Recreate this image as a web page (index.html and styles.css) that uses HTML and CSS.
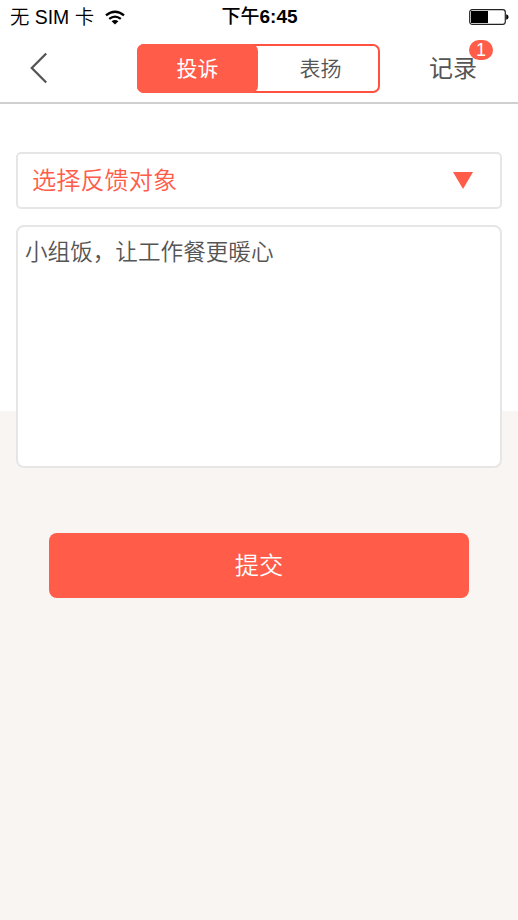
FILE: index.html
```html
<!DOCTYPE html>
<html lang="zh-CN">
<head>
<meta charset="utf-8">
<title>投诉</title>
<link rel="stylesheet" href="styles.css">
</head>
<body>
<div class="status">
  <div class="carrier"><span>无 SIM 卡</span>
    <svg class="wifi" width="20" height="15" viewBox="0 0 20 15"><g fill="none" stroke="#000" stroke-width="2.3"><path d="M1 5.3Q10-1.9 19 5.3"/><path d="M4.2 8.9Q10 4.4 15.8 8.9"/></g><path d="M6.6 11.2Q10 8.6 13.4 11.2L10 14.6Z"/></svg>
  </div>
  <div class="time"><span>下午</span>6:45</div>
  <svg class="battery" width="40" height="16" viewBox="0 0 40 16"><rect x=".7" y=".7" width="35.6" height="14.6" rx="2.5" fill="#fff" stroke="#222" stroke-width="1.2"/><path d="M2 2h17v12H2z"/><path d="M37.2 5.2q2.4 .5 2.4 2.8t-2.4 2.8z"/></svg>
</div>
<header class="nav">
  <svg class="back" width="18" height="32" viewBox="0 0 18 32"><path d="M16.2 1.5 1.8 16l14.4 14.5" fill="none" stroke="#555" stroke-width="2.3"/></svg>
  <div class="tabs"><div class="tab active">投诉</div><div class="tab">表扬</div></div>
  <div class="records">记录<span class="badge">1</span></div>
</header>
<main class="form">
  <div class="select"><span>选择反馈对象</span>
    <svg width="20" height="17" viewBox="0 0 20 17"><path d="M0 0h20L10 17z" fill="#ff5c4a"/></svg>
  </div>
  <div class="message">小组饭，让工作餐更暖心</div>
</main>
<div class="submit">提交</div>
</body>
</html>
```
FILE: styles.css
```css
* { box-sizing: border-box; }
body {
  margin: 0;
  height: 920px;
  overflow: hidden;
  background: linear-gradient(#fff 411px, #f8f5f2 411px) no-repeat;
  color: #555;
  font-family: "Liberation Sans", "Noto Sans CJK SC", sans-serif;
  font-weight: 350;
}
.status {
  height: 34px;
  padding: 0 9px 0 10px;
  display: grid;
  grid-template-columns: 1fr auto 1fr;
  align-items: center;
  color: #000;
  font-size: 19.4px;
  line-height: 34px;
}
.carrier { display: flex; align-items: center; gap: 11px; white-space: nowrap; }
.wifi { flex: none; }
.time { font-size: 19px; font-weight: 600; }
.time span { font-weight: 500; }
.battery { justify-self: end; }
.nav {
  height: 70px;
  border-bottom: 2px solid #d0d0d0;
  padding: 0 41px 0 30px;
  display: flex;
  align-items: center;
  justify-content: space-between;
}
.tabs {
  width: 243px;
  height: 49px;
  margin-left: 40px;
  display: flex;
  border: 2px solid #ff5040;
  border-radius: 7px;
  font-size: 21px;
  line-height: 45px;
  text-align: center;
}
.tab { flex: 1; margin: 0 -1px 0 4px; }
.tab.active {
  flex: none;
  width: 121px;
  margin: -2px 0 -2px -2px;
  line-height: 49px;
  border-radius: 7px;
  background: #ff5c4a;
  color: #fff;
  font-weight: 400;
}
.records { position: relative; font-size: 24px; font-weight: 400; line-height: 36px; top: 1px; }
.badge {
  position: absolute;
  left: 40px;
  top: -11px;
  width: 24px;
  height: 20px;
  border-radius: 10px;
  background: #ff5c4a;
  color: #fff;
  font-size: 18px;
  line-height: 21px;
  text-align: center;
}
.form {
  padding: 48px 16px 0;
  display: flex;
  flex-direction: column;
  gap: 16px;
}
.select, .message { background: #fff; border: 2px solid #e6e6e6; }
.select {
  height: 57px;
  border-radius: 5px;
  padding: 0 27px 0 14px;
  display: flex;
  align-items: center;
  justify-content: space-between;
  color: #ff5c4a;
  font-size: 24.2px;
  line-height: 53px;
}
.message {
  height: 243px;
  border-radius: 8px;
  padding: 9px 7px;
  font-size: 22.6px;
  line-height: 34px;
}
.submit {
  height: 65px;
  margin: 65px 49px 0;
  border-radius: 8px;
  background: #ff5c4a;
  color: #fff;
  font-size: 24.2px;
  line-height: 66px;
  text-align: center;
}
```
